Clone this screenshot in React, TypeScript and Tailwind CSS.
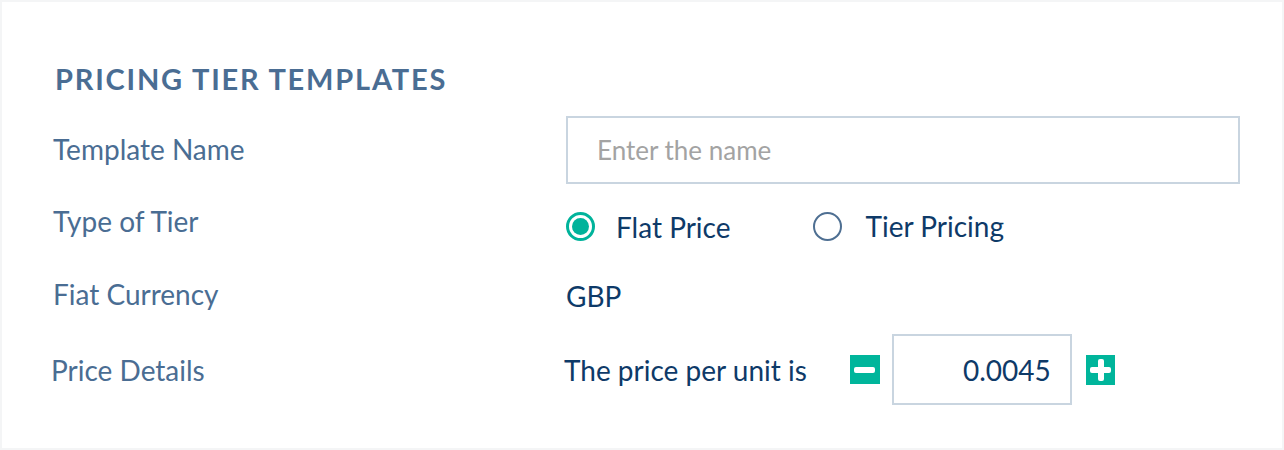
import React from "react";

export default function App() {
  return (
    <div className="w-[1284px] h-[450px] bg-[#f4f5f6] p-[2px]" style={{ fontFamily: "Lato, 'Open Sans', sans-serif" }}>
      <div className="w-full h-full bg-white pl-[51px] pr-[42px] pt-[59px]">
        <h1 className="pl-[2px] text-[29px] leading-[36px] font-bold text-[#4a6d93] tracking-[1.8px]">PRICING TIER TEMPLATES</h1>
        <div className="mt-[19px] flex items-center h-[68px]">
          <div className="w-[513px] text-[28px] text-[#4a6d93] -mt-[2px]">Template Name</div>
          <div className="flex-1 h-[68px] border-2 border-[#c9d5e0] flex items-center pl-[29px] text-[26px] text-[#a3a3a3]">
            Enter the name
          </div>
        </div>
        <div className="mt-[22px] flex items-center h-[40px]">
          <div className="w-[513px] text-[28px] text-[#4a6d93] -mt-[10px]">Type of Tier</div>
          <div className="flex items-center">
            <div className="w-[29px] h-[29px] rounded-full border-[3px] border-[#00b39b] flex items-center justify-center">
              <div className="w-[17px] h-[17px] rounded-full bg-[#00b39b]" />
            </div>
            <span className="ml-[21px] text-[28px] text-[#0e3a68] mt-[2px]">Flat Price</span>
            <div className="ml-[82px] w-[29px] h-[29px] rounded-full border-2 border-[#4e6f92]" />
            <span className="ml-[24px] text-[28px] text-[#0e3a68]">Tier Pricing</span>
          </div>
        </div>
        <div className="mt-[32px] flex items-center h-[36px]">
          <div className="w-[513px] text-[28px] text-[#4a6d93] -mt-[4px]">Fiat Currency</div>
          <div className="text-[28px] text-[#0e3a68]">GBP</div>
        </div>
        <div className="mt-[20px] flex items-center h-[71px]">
          <div className="w-[511px] text-[28px] text-[#4a6d93] -ml-[2px] mr-[2px]">Price Details</div>
          <div className="flex items-center">
            <span className="text-[28px] text-[#0e3a68]">The price per unit is</span>
            <button className="ml-[43px] w-[30px] h-[29px] bg-[#00b59b] flex items-center justify-center">
              <span className="block w-[21px] h-[6px] rounded-[2px] bg-white" />
            </button>
            <div className="ml-[12px] w-[180px] h-[71px] border-2 border-[#c9d5e0] flex items-center justify-end pr-[19px] text-[28px] text-[#0e3a68]">
              0.0045
            </div>
            <button className="ml-[14px] w-[29px] h-[30px] bg-[#00b59b] relative">
              <span className="absolute left-[4px] top-[12px] w-[21px] h-[6px] rounded-[2px] bg-white" />
              <span className="absolute left-[12px] top-[4px] w-[6px] h-[22px] rounded-[2px] bg-white" />
            </button>
          </div>
        </div>
      </div>
    </div>
  );
}
